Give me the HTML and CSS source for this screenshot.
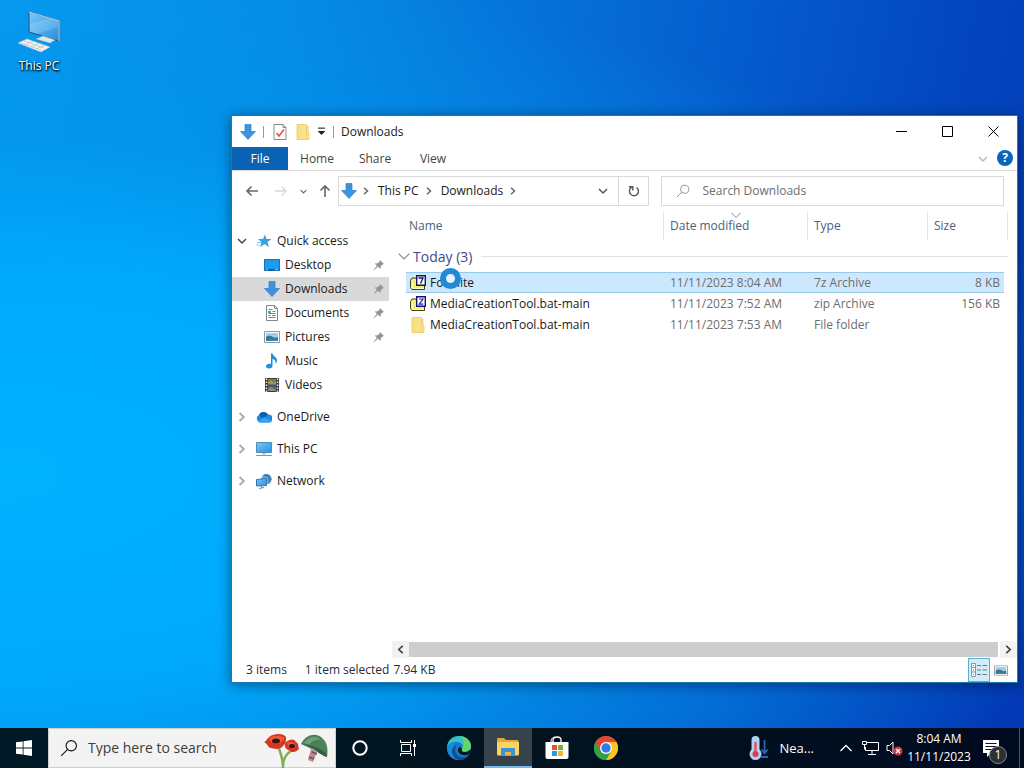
FILE: index.html
```html
<!DOCTYPE html>
<html lang="en">
<head>
    <meta charset="UTF-8">
    <meta name="viewport" content="width=device-width, initial-scale=1.0">
    <title>Downloads</title>
    <link rel="stylesheet" href="styles.css">
</head>
<body>
    <!-- Shared icons -->
    <svg class="sprite" aria-hidden="true">
        <defs>
            <linearGradient id="screenFill" x1="0" y1="0" x2="1" y2="1">
                <stop offset="0" stop-color="#7cc8f8"/>
                <stop offset="1" stop-color="#2590e0"/>
            </linearGradient>
            <linearGradient id="folderFill" x1="0" y1="0" x2="1" y2="0">
                <stop offset="0" stop-color="#f7dd83"/>
                <stop offset="1" stop-color="#fbe694"/>
            </linearGradient>
        </defs>
        <symbol id="down" viewBox="0 0 16 16">
            <path d="M5 .5h6v7h4.500L8 15.500.5 7.500H5z" fill="#3e93dc" stroke="#2c7fca" stroke-width=".7"/>
        </symbol>
        <symbol id="folder" viewBox="0 0 14 16">
            <path d="M1 .5h9.500v1.500H12v6l1 1v6.500H1z" fill="url(#folderFill)" stroke="#e8c65c" stroke-width=".7"/>
            <path d="M10.500 2v13" stroke="#f0d06e"/>
        </symbol>
        <symbol id="pin" viewBox="0 0 12 12">
            <path d="M7 1l4 4-1.500.4-1.800 2L7.500 10 5 7.800.8 11.300.5 11l3.300-4.300L1.800 4.500l2.800-.2 2-1.800z" fill="#8d979d"/>
        </symbol>
        <symbol id="right" viewBox="0 0 8 8">
            <path d="M2 .8L5.500 4 2 7.200" fill="none" stroke="currentColor" stroke-width="1.500"/>
        </symbol>
        <symbol id="chevron" viewBox="0 0 10 10">
            <path d="M1 3l4 4 4-4" fill="none" stroke="currentColor" stroke-width="1.500"/>
        </symbol>
        <symbol id="chevronThin" viewBox="0 0 10 10">
            <path d="M.5 3L5 7.500 9.500 3" fill="none" stroke="currentColor"/>
        </symbol>
        <symbol id="glass" viewBox="0 0 16 16">
            <circle cx="10" cy="6" r="4.600" fill="none" stroke="currentColor"/>
            <path d="M6.800 9.300L1 15" fill="none" stroke="currentColor"/>
        </symbol>
        <symbol id="picture" viewBox="0 0 16 12">
            <path d="M.5.500h15v11H.5z" fill="#fff" stroke="#8d979d"/>
            <path d="M2 2h12v8H2z" fill="#9ed0ee"/>
            <path d="M2 6c3-2 5-1 7 0s3 1 5 0v4H2z" fill="#44738a"/>
            <path d="M2 8.500h12V10H2z" fill="#2b8ac4"/>
        </symbol>
        <symbol id="archive" viewBox="0 0 16 16">
            <path d="M.5 5.500L2 3h4l1 2h7.500v9.500H2l-1.500-2z" fill="#f3ef72" stroke="#444218"/>
            <path d="M2.500 7v6.500H14" fill="none" stroke="#fffcc0"/>
            <path d="M6.700.700h8.600v9.600H6.700z" fill="#fff" stroke="#15156b" stroke-width="1.400"/>
        </symbol>
    </svg>

    <main class="desktop">
        <a class="shortcut" href="#">
            <svg width="44" height="44" viewBox="0 0 44 44">
                <path d="M12 2l30 9v20l-30-9z" fill="url(#screenFill)" stroke="#1d5485"/>
                <path d="M12 2l30 9v20" fill="none" stroke="#c8d4dc"/>
                <path d="M13 14L33 8l8 3v6L20 24l-7-2z" fill="#fff" opacity=".15"/>
                <path d="M19 29l7-3 12 4-5 3z" fill="#dfe6ea" stroke="#a9b8c2" stroke-width=".5"/>
                <path d="M1 33l9-4 23 8-9 5z" fill="#f2f5f7" stroke="#b8c4cc" stroke-width=".6"/>
                <path d="M4 33l20 7M7 31l20 7M8 35l8-4M14 37l8-4M19 39l9-4" stroke="#a8b4bc" stroke-width=".6"/>
            </svg>
            <span>This PC</span>
        </a>

        <section class="window">
            <header class="titlebar">
                <svg width="16" height="16"><use href="#down"/></svg>
                <span class="divider"></span>
                <svg class="gap" width="14" height="16" viewBox="0 0 14 16">
                    <path d="M1 .5h9l3 3v12H1z" fill="#fff" stroke="#8a8a8a"/>
                    <path d="M10 .5v3h3" fill="none" stroke="#8a8a8a"/>
                    <path d="M3.500 9l2.500 3 5-6.500" fill="none" stroke="#e0503c" stroke-width="1.500"/>
                </svg>
                <svg class="gap" width="14" height="16"><use href="#folder"/></svg>
                <svg width="9" height="9" viewBox="0 0 8 8"><path d="M1 1h6" stroke="#222"/><path d="M.5 3.500h7L4 7z" fill="#222"/></svg>
                <span class="divider"></span>
                <h1>Downloads</h1>
                <div class="caption">
                    <button type="button" aria-label="Minimize"><svg width="11" height="11" viewBox="0 0 11 11"><path d="M0 5.500h11" stroke="#000"/></svg></button>
                    <button type="button" aria-label="Maximize"><svg width="11" height="11" viewBox="0 0 11 11"><path d="M.5.500h10v10H.5z" fill="none" stroke="#000"/></svg></button>
                    <button type="button" aria-label="Close"><svg width="11" height="11" viewBox="0 0 11 11"><path d="M.5.500l10 10M10.500.500l-10 10" stroke="#000"/></svg></button>
                </div>
            </header>

            <div class="ribbon">
                <button type="button" class="file">File</button>
                <button type="button">Home</button>
                <button type="button">Share</button>
                <button type="button">View</button>
                <button type="button" class="expand" aria-label="Expand ribbon"><svg width="10" height="10"><use href="#chevron"/></svg></button>
                <button type="button" class="help" aria-label="Help">?</button>
            </div>

            <div class="toolbar">
                <button type="button" class="arrow" aria-label="Back"><svg width="14" height="12" viewBox="0 0 14 12"><path d="M13 6H2M6.500 1.500L2 6l4.500 4.500" fill="none" stroke="#666" stroke-width="1.600"/></svg></button>
                <button type="button" class="arrow" aria-label="Forward"><svg width="14" height="12" viewBox="0 0 14 12"><path d="M1 6h11M7.500 1.500L12 6l-4.500 4.500" fill="none" stroke="#d8d8d8" stroke-width="1.400"/></svg></button>
                <button type="button" class="recent" aria-label="Recent locations"><svg width="7" height="7" viewBox="0 0 10 10"><use href="#chevron"/></svg></button>
                <button type="button" class="up" aria-label="Up"><svg width="12" height="14" viewBox="0 0 12 14"><path d="M6 13V2M1.500 6.500L6 2l4.500 4.500" fill="none" stroke="#666" stroke-width="1.600"/></svg></button>
                <nav class="address" aria-label="Address">
                    <svg width="16" height="16"><use href="#down"/></svg>
                    <svg class="sep" width="8" height="8"><use href="#right"/></svg>
                    <a href="#">This PC</a>
                    <svg class="sep" width="8" height="8"><use href="#right"/></svg>
                    <a href="#">Downloads</a>
                    <svg class="sep" width="8" height="8"><use href="#right"/></svg>
                    <button type="button" class="history" aria-label="Previous locations"><svg width="10" height="10"><use href="#chevron"/></svg></button>
                    <button type="button" class="refresh" aria-label="Refresh"><svg width="12" height="12" viewBox="0 0 12 12"><path d="M8.500 2.500A4.500 4.500 0 1 1 3.500 2.400M1 1.800h3.800v3.700" fill="none" stroke="#555" stroke-width="1.400"/></svg></button>
                </nav>
                <label class="search">
                    <svg width="14" height="14"><use href="#glass"/></svg>
                    <input type="text" placeholder="Search Downloads" aria-label="Search Downloads">
                </label>
            </div>

            <div class="content">
                <nav class="tree" aria-label="Folders">
                    <a href="#" class="root open">
                        <svg class="toggle" width="10" height="10"><use href="#chevron"/></svg>
                        <svg width="16" height="16" viewBox="0 0 16 16"><path d="M9 1.500l1.500 4.500h5l-4 3 1.500 5-4.500-3-4.500 3L5.500 9 2 6h5z" fill="#35a3e2"/><path d="M1 9.500h4M.5 12h3" stroke="#7fc4ec"/></svg>
                        <span>Quick access</span>
                    </a>
                    <a href="#">
                        <svg width="16" height="16" viewBox="0 0 16 16"><path d="M.5 2.500h15v11H.5z" fill="#1d9cee" stroke="#1674b8"/><path d="M1 12h14v1.500H1z" fill="#0a5fa8"/><path d="M2 12.700h2M11 12.700h3" stroke="#bfe2fa" stroke-width=".8"/></svg>
                        <span>Desktop</span>
                        <svg class="pin" width="12" height="12"><use href="#pin"/></svg>
                    </a>
                    <a href="#" class="current">
                        <svg width="16" height="16"><use href="#down"/></svg>
                        <span>Downloads</span>
                        <svg class="pin" width="12" height="12"><use href="#pin"/></svg>
                    </a>
                    <a href="#">
                        <svg width="16" height="16" viewBox="0 0 16 16"><path d="M2.500.500h8l3 3v12h-11z" fill="#fff" stroke="#7d8a92"/><path d="M10.500.500v3h3" fill="none" stroke="#7d8a92"/><path d="M4.500 4.500h4M8.500 6.500h3M4.500 8.500h7M4.500 10.500h2M8 10.500h3.500M4.500 12.500h7" stroke="#3a96c8"/><path d="M4 6h3v2H4z" fill="#58a7a4"/></svg>
                        <span>Documents</span>
                        <svg class="pin" width="12" height="12"><use href="#pin"/></svg>
                    </a>
                    <a href="#">
                        <svg width="16" height="12"><use href="#picture"/></svg>
                        <span>Pictures</span>
                        <svg class="pin" width="12" height="12"><use href="#pin"/></svg>
                    </a>
                    <a href="#">
                        <svg width="16" height="16" viewBox="0 0 16 16"><path d="M7 .5h1.500c.5 3 4.500 3.500 4.500 7 0 1.500-.6 2.700-1.500 3.500.8-3-.8-4.500-3-5V13c0 1.500-1.500 2.500-3.500 2.500S2 14.500 2 13.300C2 11.500 4.500 10.500 7 11z" fill="#1d8ed8"/></svg>
                        <span>Music</span>
                    </a>
                    <a href="#">
                        <svg width="16" height="16" viewBox="0 0 16 16"><path d="M1 1h14v14H1z" fill="#383a42"/><path d="M4 2h8v5.500H4z" fill="#77804c"/><path d="M4 8.500h8V14H4z" fill="#3f61b0"/><path d="M4 5l3-2 3 3 2-2v3.500H4zM4 12l3-2 5 3v1H4z" fill="#b5a64a" opacity=".7"/><path d="M2.500 1.500v14M13.500 1.500v14" stroke="#e8e8e8" stroke-width="1.500" stroke-dasharray="1.500 1.500"/></svg>
                        <span>Videos</span>
                    </a>
                    <a href="#" class="root">
                        <svg class="toggle" width="10" height="10" viewBox="0 0 8 8"><use href="#right"/></svg>
                        <svg width="16" height="16" viewBox="0 0 16 16"><path d="M4 13.500a4 4 0 0 1-1-7.500A5 5 0 0 1 12 5.500a4 4 0 0 1 1 8z" fill="#1a8ae0"/><path d="M3 6A5 5 0 0 1 12 5.500L7 10z" fill="#0c5cb4"/><path d="M2 13l6-5 7.500 3.500c-.5 1.500-1 2-2.500 2H4z" fill="#2fa6ee"/></svg>
                        <span>OneDrive</span>
                    </a>
                    <a href="#" class="root">
                        <svg class="toggle" width="10" height="10" viewBox="0 0 8 8"><use href="#right"/></svg>
                        <svg width="16" height="16" viewBox="0 0 16 16"><path d="M.5 1.500h15v10H.5z" fill="url(#screenFill)" stroke="#4c8db8"/><path d="M6 12h4v1.500H6z" fill="#b8c6d0"/><path d="M0 14.500h16" stroke="#7f99aa"/></svg>
                        <span>This PC</span>
                    </a>
                    <a href="#" class="root">
                        <svg class="toggle" width="10" height="10" viewBox="0 0 8 8"><use href="#right"/></svg>
                        <svg width="16" height="16" viewBox="0 0 16 16"><circle cx="10.500" cy="6" r="5.200" fill="#68aeda"/><path d="M7 3l5 1 1 7 2.500-5L13 2 9 1z" fill="#3b7eae"/><path d="M.5 6.500l10-1v7l-10 .5z" fill="url(#screenFill)" stroke="#3577a8"/><path d="M3 15.500l5-1M5.500 13v2" stroke="#6c8ca2"/></svg>
                        <span>Network</span>
                    </a>
                </nav>

                <div class="list">
                    <table>
                        <colgroup><col><col class="date"><col class="type"><col class="size"><col class="end"></colgroup>
                        <thead>
                            <tr>
                                <th>Name</th>
                                <th class="sorted">Date modified<svg width="10" height="10"><use href="#chevronThin"/></svg></th>
                                <th>Type</th>
                                <th>Size</th>
                                <td></td>
                            </tr>
                        </thead>
                        <tbody>
                            <tr class="group">
                                <td colspan="5"><div><svg width="12" height="12" viewBox="0 0 10 10"><use href="#chevronThin"/></svg><span>Today (3)</span></div></td>
                            </tr>
                            <tr class="selected">
                                <td><div class="name"><svg width="16" height="16" viewBox="0 0 16 16"><use href="#archive"/><path d="M8.500 3h4.500l-2.500 5.500" fill="none" stroke="#15156b" stroke-width="1.300"/></svg>Fortnite</div></td>
                                <td>11/11/2023 8:04 AM</td>
                                <td>7z Archive</td>
                                <td>8 KB</td>
                                <td></td>
                            </tr>
                            <tr>
                                <td><div class="name"><svg width="16" height="16" viewBox="0 0 16 16"><use href="#archive"/><path d="M9 3h4L9.200 8.200h4" fill="none" stroke="#2020d0" stroke-width="1.200"/></svg>MediaCreationTool.bat-main</div></td>
                                <td>11/11/2023 7:52 AM</td>
                                <td>zip Archive</td>
                                <td>156 KB</td>
                                <td></td>
                            </tr>
                            <tr>
                                <td><div class="name"><svg width="16" height="16" viewBox="0 0 14 16"><use href="#folder"/></svg>MediaCreationTool.bat-main</div></td>
                                <td>11/11/2023 7:53 AM</td>
                                <td>File folder</td>
                                <td></td>
                                <td></td>
                            </tr>
                        </tbody>
                    </table>
                    <div class="scrollbar">
                        <button type="button" class="left" aria-label="Scroll left"><svg width="9" height="9" viewBox="0 0 8 8"><use href="#right"/></svg></button>
                        <div class="thumb"></div>
                        <button type="button" aria-label="Scroll right"><svg width="9" height="9" viewBox="0 0 8 8"><use href="#right"/></svg></button>
                    </div>
                </div>
            </div>

            <footer class="status">
                <span class="count">3 items</span>
                <span>1 item selected</span>
                <span>7.94 KB</span>
                <button type="button" class="view active" aria-label="Details"><svg width="16" height="14" viewBox="0 0 16 14"><path d="M.5.500h4v13h-4zM.5 4.500h4M.5 9h4" fill="#fff" stroke="#8299a5"/><path d="M2 2.500h1M2 7h1M2 11.500h1M6 2.500h4M11.500 2.500H16M6 7h4M11.500 7H16M6 11.500h4M11.500 11.500H16" stroke="#5f7c8c"/></svg></button>
                <button type="button" class="view" aria-label="Large icons"><svg width="14" height="11" viewBox="0 0 16 12"><use href="#picture"/></svg></button>
            </footer>
        </section>

        <div class="busy"></div>
    </main>

    <footer class="taskbar">
        <button type="button" class="task" aria-label="Start"><svg width="16" height="16" viewBox="0 0 16 16"><path d="M0 2.300L6.700 1.400v6.200H0zM7.500 1.300L16 0v7.600H7.500zM0 8.400h6.700v6.200L0 13.700zM7.500 8.400H16V16l-8.500-1.300z" fill="#fff"/></svg></button>
        <label class="task-search">
            <svg width="18" height="18" viewBox="0 0 16 16"><use href="#glass"/></svg>
            <input type="text" placeholder="Type here to search" aria-label="Type here to search">
            <svg width="66" height="39" viewBox="0 0 66 39">
                <path d="M13 15c3 7 6 13 6 24M28 21c-7 5-9 9-9 18" fill="none" stroke="#7fae55" stroke-width="2.500"/>
                <path d="M0 13c3-1 4-6 9-7 5-2 11-1 13 2 0 4 0 6-3 9-3 4-9 3-12 2-3 0-3-4-7-6z" fill="#d9341f"/>
                <path d="M5 10c4-4 10-4 16-1-3 3-4 6-9 6-3 0-5-2-7-5z" fill="#f05a36"/>
                <ellipse cx="12" cy="12" rx="4" ry="2.500" fill="#2a1a1a"/>
                <path d="M21 14c4-4 9-5 11-1 3 2 2 4 3 7-3 3-5 3-7 3-4-2-8-3-7-9z" fill="#d9341f"/>
                <path d="M23 14c4-2 7-1 9 3-2 3-5 3-8 0z" fill="#f05a36"/>
                <ellipse cx="28" cy="17" rx="3" ry="2" fill="#2a1a1a"/>
                <path d="M47 20l6 3-4 10-5-2z" fill="#b98a8e"/>
                <path d="M48 23l5 2M45 28l5 2" stroke="#744d5b" stroke-width="1.500"/>
                <path d="M37 15C42 5 53 3 59 10c5 4 5 13 4 18-2 0-5-2-8-4-6-4-12-6-18-9z" fill="#4c8058"/>
                <path d="M40 14c5-7 12-8 17-3-5-1-9 0-12 5z" fill="#70a078"/>
                <path d="M37 15c7 1 14 4 18 9l8 4-1-4C55 19 47 15 37 15z" fill="#335c40"/>
            </svg>
        </label>
        <button type="button" class="task" aria-label="Cortana"><svg width="16" height="16" viewBox="0 0 16 16"><circle cx="8" cy="8" r="6.700" fill="none" stroke="#fff" stroke-width="2"/></svg></button>
        <button type="button" class="task" aria-label="Task view"><svg width="16" height="16" viewBox="0 0 16 16"><path d="M1.500 4.500h9v7h-9zM.5 0v2.500h11V0M.5 16v-2.500h11V16M14.500 0v16" fill="none" stroke="#fff"/><path d="M13 4h3v3h-3z" fill="#fff"/></svg></button>
        <div class="apps">
            <button type="button" class="task" aria-label="Edge"><svg width="24" height="24" viewBox="0 0 24 24">
                <circle cx="12" cy="12" r="12" fill="#1777c8"/>
                <path d="M0 11C1 3 7 0 12 0c7 0 12 5 12 10 0 4-3 6-6 6-4 0-4-2-3-3 2-4-1-7-5-7-5 0-8 2-10 5z" fill="#35c1c9"/>
                <path d="M13 0c7 1 11 5 11 10 0 4-3 6-6 6-4 0-4-2-3-3 3-5 3-9-2-13z" fill="#62d66c"/>
                <path d="M0 12c1-5 6-7 10-6-4 2-5 6-4 10 1 4 4 7 8 8C6 25 0 19 0 12z" fill="#168bd8"/>
                <path d="M10 9c-3 2-3 10 4 12 3 1 6 0 8-3-3 6-9 7-13 5-6-5-5-12 1-14z" fill="#104c90"/>
                <path d="M15 13c-1 2 0 3 3 3 2 0 4-1 6-3 0 2-1 3-2 5-5 3-11 0-11-4 0-3 3-4 4-1z" fill="#021722"/>
            </svg></button>
            <button type="button" class="task running" aria-label="File Explorer"><svg width="22" height="18" viewBox="0 0 22 18">
                <path d="M0 1.500C0 .5.500 0 1.500 0H7l2 2h11c1 0 1.500.5 1.500 1.500V7H0z" fill="#e9a632"/>
                <path d="M0 4h22v12.500c0 .5-.5 1-1 1H1c-.5 0-1-.5-1-1z" fill="#fcd462"/>
                <path d="M4 17.500V11c0-.6.400-1 1-1h12c.6 0 1 .4 1 1v6.500h-4V14H8v3.500z" fill="#3c92d5"/>
                <path d="M8 14h6v3.500H8z" fill="#e7b74e"/>
            </svg></button>
            <button type="button" class="task" aria-label="Store"><svg width="24" height="24" viewBox="0 0 24 24">
                <path d="M8 7V4c0-4 8-4 8 0v3" fill="none" stroke="#fff" stroke-width="1.300"/>
                <path d="M6 7V5c0-3 3-4 4-4" fill="none" stroke="#fff"/>
                <path d="M.5 6h23v15c0 1.200-.8 2-2 2h-19c-1.200 0-2-.8-2-2z" fill="#fff"/>
                <path d="M7 9h5v5H7z" fill="#e8502f"/><path d="M13 9h5v5h-5z" fill="#78b42d"/>
                <path d="M7 15h5v5H7z" fill="#2a9ad8"/><path d="M13 15h5v5h-5z" fill="#f4b52a"/>
            </svg></button>
            <button type="button" class="task" aria-label="Chrome"><svg width="24" height="24" viewBox="0 0 24 24">
                <circle cx="12" cy="12" r="12" fill="#34a048"/>
                <path d="M1.600 6A12 12 0 0 1 22.400 6H12v12z" fill="#e84335"/>
                <path d="M22.400 6A12 12 0 0 1 12 24l5.200-9L12 6z" fill="#fbc423"/>
                <path d="M1.600 6A12 12 0 0 0 12 24l5.200-9H6.800z" fill="#34a048"/>
                <path d="M1.600 6L6.800 15 12 6z" fill="#e84335"/>
                <circle cx="12" cy="12" r="6" fill="#fff"/><circle cx="12" cy="12" r="4.700" fill="#3879e8"/>
            </svg></button>
        </div>

        <div class="tray">
            <button type="button" class="weather">
                <svg width="20" height="24" viewBox="0 0 20 24">
                    <path d="M2.500 4a4 4 0 0 1 8 0v9.500a6 6 0 1 1-8 0z" fill="#a9d4f4"/>
                    <path d="M6.500 6v11" stroke="#e05560" stroke-width="2.500"/>
                    <circle cx="6.500" cy="18" r="3" fill="#dc3d4d"/>
                    <path d="M15.500 4v13M12.500 13.500l3 4 3-4M12 21h7" fill="none" stroke="#2b67b0" stroke-width="1.800"/>
                </svg>
                <span>Nea...</span>
            </button>
            <button type="button" class="tray-icon" aria-label="Show hidden icons"><svg width="12" height="8" viewBox="0 0 12 8"><path d="M.5 7L6 1.500 11.500 7" fill="none" stroke="#fff" stroke-width="1.300"/></svg></button>
            <button type="button" class="tray-icon" aria-label="Network"><svg width="17" height="14" viewBox="0 0 17 14"><path d="M4 1.500h12.500v8H3.500V6M10 9.500v4M6 13.500h8" fill="none" stroke="#fff"/><path d="M.5.500h4v3h-4zM2.500 3.500v5" fill="none" stroke="#fff"/></svg></button>
            <button type="button" class="tray-icon" aria-label="Volume"><svg width="17" height="15" viewBox="0 0 17 15"><path d="M1 4.500h2.500L7 1v12L3.500 9.500H1z" fill="none" stroke="#fff"/><circle cx="12" cy="10" r="4.500" fill="#d03438"/><path d="M10 8l4 4M14 8l-4 4" stroke="#fff" stroke-width="1.300"/></svg></button>
            <button type="button" class="clock"><span>8:04 AM</span><span>11/11/2023</span></button>
            <button type="button" class="notify" aria-label="Notifications">
                <svg width="16" height="17" viewBox="0 0 16 17"><path d="M0 0h16v13H8l-4 4v-4H0z" fill="#fff"/><path d="M2.500 3.500h11M2.500 6.500h11M2.500 9.500h6" stroke="#061226"/></svg>
                <span class="badge">1</span>
            </button>
        </div>
    </footer>
</body>
</html>
```
FILE: styles.css
```css
* {
    box-sizing: border-box;
}

body {
    display: flex;
    flex-direction: column;
    min-height: 100vh;
    margin: 0;
    font-family: "Open Sans", "Noto Sans", sans-serif;
    font-size: 12px;
    line-height: 16px;
    color: #1a1a1a;
}

button {
    display: flex;
    align-items: center;
    justify-content: center;
    padding: 0;
    border: none;
    background: none;
    font: inherit;
    color: inherit;
}

input {
    min-width: 0;
    padding: 0;
    border: none;
    outline: none;
    background: none;
    font: inherit;
}

a {
    color: inherit;
    text-decoration: none;
}

svg {
    display: block;
    flex-shrink: 0;
}

.sprite {
    position: absolute;
    width: 0;
    height: 0;
}

/* Desktop */
.desktop {
    position: relative;
    flex: 1;
    background: radial-gradient(ellipse at 0% 65%, #00b2ff 0%, #00a8fc 32%, rgba(0, 150, 236, 0.6) 50%, rgba(0, 90, 210, 0) 78%), linear-gradient(100deg, #069aee 0%, #068ce6 25%, #0562d0 60%, #0345be 85%, #0238b4 100%);
}

.shortcut {
    display: flex;
    flex-direction: column;
    align-items: center;
    width: 78px;
    padding-top: 10px;
    gap: 4px;
    color: white;
    text-shadow: 1px 1px 2px #000, 0 1px 2px #000;
}

/* Explorer window */
.window {
    position: absolute;
    top: 115px;
    right: 6px;
    bottom: 45px;
    left: 231px;
    display: flex;
    flex-direction: column;
    border: 1px solid #1878b8;
    background: white;
    box-shadow: 0 2px 12px rgba(0, 0, 0, 0.45);
}

.titlebar {
    display: flex;
    align-items: center;
    height: 31px;
    padding-left: 8px;
    gap: 7px;
}

.titlebar .gap {
    margin-left: 2px;
}

.divider {
    width: 1px;
    height: 12px;
    background: #999;
}

.titlebar h1 {
    margin: 0;
    font-size: 12px;
    font-weight: 400;
}

.caption {
    display: flex;
    margin-left: auto;
    padding-right: 1px;
}

.caption button {
    width: 46px;
    height: 30px;
}

.ribbon {
    display: flex;
    height: 24px;
    border-bottom: 1px solid #dcdcdc;
    color: #444;
}

.ribbon button {
    width: 58px;
}

.ribbon .file {
    width: 56px;
    background: #0a62b4;
    color: white;
}

.ribbon .expand {
    width: 28px;
    margin-left: auto;
    color: #bbb;
}

.ribbon .help {
    width: 16px;
    height: 16px;
    margin: 3px 4px 0 0;
    border-radius: 50%;
    background: #0a66b8;
    color: white;
    font-weight: 700;
}

.toolbar {
    display: flex;
    align-items: center;
    height: 40px;
    padding: 0 13px 0 5px;
    color: #666;
}

.toolbar .arrow {
    width: 29px;
}

.toolbar .recent {
    width: 17px;
}

.toolbar .up {
    width: 26px;
}

.address {
    display: flex;
    flex: 307 1 0;
    align-items: center;
    height: 30px;
    padding-left: 2px;
    border: 1px solid #d9d9d9;
    color: #1a1a1a;
}

.address .sep {
    margin: 0 5px;
    color: #666;
}

.address a {
    margin: 0 1px 0 3px;
}

.address .history {
    width: 30px;
    margin-left: auto;
    color: #555;
}

.address .refresh {
    width: 30px;
    height: 100%;
    border-left: 1px solid #d9d9d9;
}

.search {
    display: flex;
    flex: 326 1 0;
    align-items: center;
    height: 30px;
    margin-left: 12px;
    padding-left: 14px;
    gap: 12px;
    border: 1px solid #d9d9d9;
    color: #888;
}

.search input {
    flex: 1;
}

.search input::placeholder {
    color: #6d6d6d;
}

.content {
    display: flex;
    flex: 1;
}

/* Folder tree */
.tree {
    width: 157px;
    padding-top: 18px;
}

.tree a {
    display: flex;
    align-items: center;
    height: 24px;
    padding: 0 4px 0 32px;
    gap: 5px;
}

.tree .root {
    margin-top: 8px;
    padding-left: 5px;
}

.tree .open {
    margin-top: 0;
}

.tree .toggle {
    margin-right: 4px;
    color: #aaa;
}

.tree .open .toggle {
    color: #444;
}

.tree .current {
    background: #d9d9d9;
}

.tree .pin {
    margin-left: auto;
}

/* File list */
.list {
    display: flex;
    flex: 1;
    flex-direction: column;
    padding: 1px 9px 0 17px;
}

.list table {
    width: 100%;
    border-spacing: 0;
    table-layout: fixed;
}

.date {
    width: 144px;
}

.type {
    width: 120px;
}

.size {
    width: 77px;
}

.end {
    width: 4px;
}

.list th {
    position: relative;
    height: 28px;
    padding: 0 0 0 6px;
    border-left: 1px solid #e5e5e5;
    color: #4c607a;
    font-weight: 400;
    text-align: left;
}

.list th:first-child {
    padding-left: 3px;
    border-left: none;
}

.list thead td {
    padding: 0;
    border-right: 1px solid #e5e5e5;
}

.sorted svg {
    position: absolute;
    top: -2px;
    left: 67px;
    color: #888;
}

.list tbody td {
    height: 21px;
    padding: 0 0 0 7px;
    border: 1px solid transparent;
    border-width: 1px 0;
    color: #6d6d6d;
    line-height: 19px;
}

.list tbody td:first-child {
    padding-left: 4px;
    color: #1a1a1a;
}

.list tbody td:nth-child(4) {
    padding-right: 4px;
    text-align: right;
}

.list tbody td:last-child {
    padding: 0;
}

.list .selected td:not(:last-child) {
    border-color: #99c9e8;
    background: #cce8ff;
}

.list .group td {
    height: 32px;
}

.group div {
    display: flex;
    align-items: center;
    margin-left: -8px;
    gap: 3px;
    color: #888;
}

.group td:last-child div {
    margin-left: -8px;
}

.group span {
    color: #3c4a8c;
    font-size: 14px;
}

.group div::after {
    flex: 1;
    height: 1px;
    margin-left: 6px;
    background: #e2e2e2;
    content: "";
}

.name {
    display: flex;
    align-items: center;
    gap: 4px;
}

.scrollbar {
    display: flex;
    height: 17px;
    margin: auto -9px 0 -14px;
    color: #444;
}

.scrollbar button {
    width: 17px;
    background: #f2f2f2;
}

.scrollbar .left svg {
    transform: rotate(180deg);
}

.thumb {
    flex: 1;
    height: 15px;
    margin: 1px 2px 1px 0;
    background: #cdcdcd;
}

.status {
    display: flex;
    align-items: center;
    height: 24px;
    padding: 0 5px 0 14px;
    gap: 4px;
    color: #1e2d46;
}

.status .count {
    margin-right: 14px;
}

.status .view {
    width: 22px;
    height: 24px;
}

.status .active {
    margin-left: auto;
    border: 1px solid #5aaed4;
    background: #d3edf8;
}

.status .view:last-child {
    margin-left: -4px;
}

/* Busy pointer */
.busy {
    position: absolute;
    top: 268px;
    left: 440px;
    width: 21px;
    height: 21px;
    border: 6px solid #1f8ad6;
    border-radius: 50%;
    background: #e6f4fd;
}

/* Taskbar */
.taskbar {
    display: flex;
    height: 40px;
    background: linear-gradient(90deg, #001a28, #02131f 50%, #000a20);
    color: white;
}

.task {
    width: 48px;
}

.task-search {
    display: flex;
    align-items: center;
    width: 288px;
    padding: 0 5px 0 11px;
    gap: 10px;
    border: 1px solid #ccd0d2;
    background: #f3f3f3;
    color: #111;
}

.task-search input {
    flex: 1;
    font-size: 14px;
}

.task-search input::placeholder {
    color: #3c3c3c;
}

.apps {
    display: flex;
    margin-left: 3px;
    gap: 1px;
}

.running {
    border-bottom: 2px solid #76b9ed;
    background: #36434c;
}

.tray {
    display: flex;
    margin-left: auto;
    padding-right: 4px;
}

.weather {
    margin-right: 20px;
    gap: 10px;
    font-size: 13px;
}

.tray-icon {
    width: 24px;
}

.clock {
    flex-direction: column;
    width: 66px;
    line-height: 18px;
}

.notify {
    position: relative;
    width: 48px;
    padding-right: 9px;
    border-right: 1px solid #4b5566;
}

.badge {
    position: absolute;
    right: 12px;
    bottom: 4px;
    width: 18px;
    height: 18px;
    border: 1px solid #888;
    border-radius: 50%;
    background: #2b3038;
}
```
